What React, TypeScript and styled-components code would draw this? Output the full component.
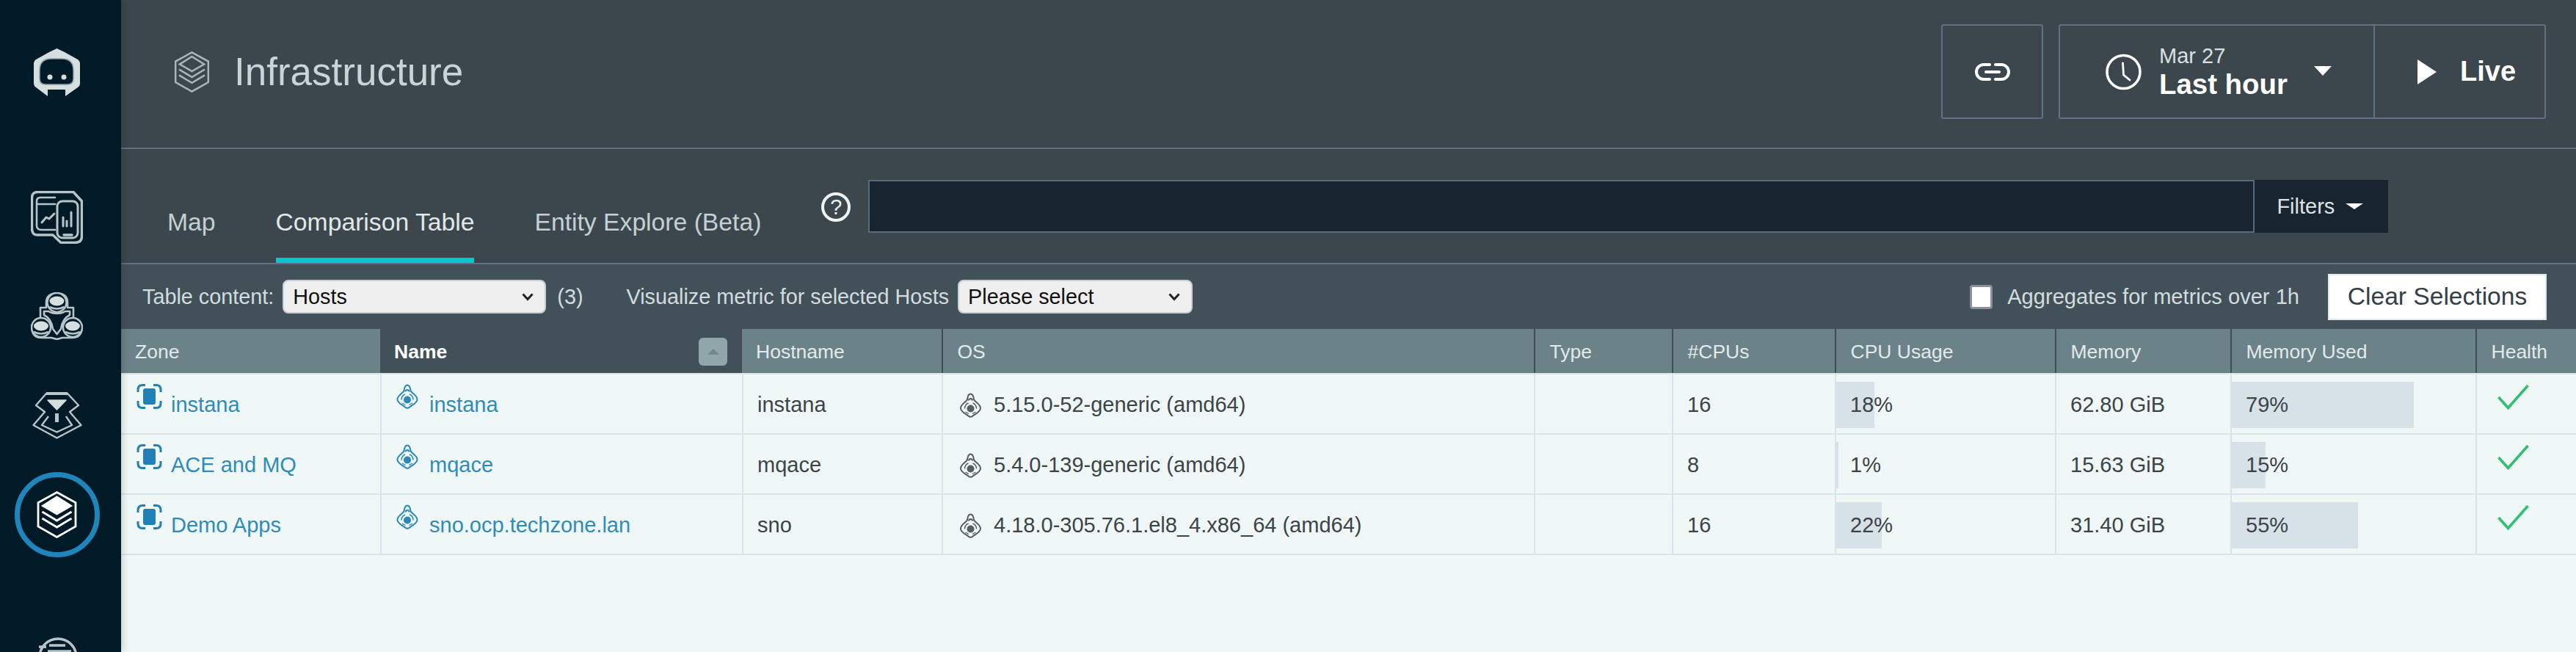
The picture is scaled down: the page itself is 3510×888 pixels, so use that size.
import React from "react";
import styled, { createGlobalStyle } from "styled-components";

const Global = createGlobalStyle`
  html, body { margin: 0; padding: 0; background: #f0f7f7; }
  * { box-sizing: border-box; }
  body { font-family: "Liberation Sans", Arial, sans-serif; }
`;

const Page = styled.div`
  display: flex;
  width: 3510px;
  height: 888px;
  overflow: hidden;
`;

const Sidebar = styled.nav`
  flex: 0 0 165px;
  height: 888px;
  overflow: hidden;
  background: #001a27;
  display: flex;
  flex-direction: column;
  align-items: center;
  padding-right: 10px;
  position: relative;
  z-index: 2;
  box-shadow: 2px 0 10px rgba(0, 0, 0, 0.18);
`;

const LogoSlot = styled.div`
  height: 228px;
  flex: none;
  padding-top: 66px;
  display: flex;
  justify-content: center;
  align-items: flex-start;
`;

const NavSlot = styled.div<{ $h?: number }>`
  height: ${(p) => p.$h ?? 135}px;
  flex: none;
  width: 100%;
  display: flex;
  justify-content: center;
  align-items: center;
`;

const ActiveRing = styled.div`
  width: 116px;
  height: 116px;
  border-radius: 50%;
  border: 7px solid #1f86bb;
  display: flex;
  align-items: center;
  justify-content: center;
`;

const LastSlot = styled.div`
  flex: none;
  margin-top: 99px;
  display: flex;
  justify-content: center;
`;

const Main = styled.main`
  flex: 1;
  min-width: 0;
  display: flex;
  flex-direction: column;
  height: 888px;
  background: #f0f7f7;
`;

const Header = styled.header`
  height: 203px;
  flex: none;
  background: #3b474c;
  border-bottom: 2px solid #5f7183;
  display: flex;
  align-items: center;
  padding: 0 41px 6px 72px;
`;

const Title = styled.h1`
  margin: 0 0 0 33px;
  font-size: 53px;
  line-height: 60px;
  font-weight: 400;
  color: #c8d4d6;
`;

const HeaderActions = styled.div`
  margin-left: auto;
  display: flex;
  gap: 21px;
`;

const LinkButton = styled.div`
  width: 139px;
  height: 129px;
  border: 2px solid #5f7183;
  border-radius: 3px;
  display: flex;
  align-items: center;
  justify-content: center;
`;

const TimeGroup = styled.div`
  width: 664px;
  height: 129px;
  border: 2px solid #5f7183;
  border-radius: 3px;
  display: flex;
`;

const TimePicker = styled.div`
  width: 429px;
  flex: none;
  display: flex;
  align-items: center;
  padding-left: 62px;
  border-right: 2px solid #5f7183;
`;

const TimeText = styled.div`
  margin-left: 24px;
  padding-top: 2px;
  display: flex;
  flex-direction: column;
  color: #fff;
`;

const TimeDate = styled.span`
  font-size: 29px;
  line-height: 33px;
  color: #d8e0e2;
`;

const TimeRange = styled.span`
  font-size: 38.4px;
  line-height: 44px;
  font-weight: 700;
`;

const Caret = styled.span<{ $w: number; $h: number; $color: string }>`
  display: block;
  flex: none;
  width: 0;
  height: 0;
  border-left: ${(p) => p.$w / 2}px solid transparent;
  border-right: ${(p) => p.$w / 2}px solid transparent;
  border-top: ${(p) => p.$h}px solid ${(p) => p.$color};
`;

const CaretSlot = styled.div`
  margin-left: 36px;
  margin-top: -3px;
`;

const LiveButton = styled.div`
  flex: 1;
  display: flex;
  align-items: center;
  padding-left: 58px;
  color: #fff;
  font-size: 38px;
  font-weight: 700;
`;

const LiveLabel = styled.span`
  margin-left: 32px;
`;

const TabsBar = styled.div`
  height: 157px;
  flex: none;
  background: #3b474c;
  border-bottom: 2px solid #5f7183;
  display: flex;
  padding-left: 22px;
`;

const TabList = styled.div`
  display: flex;
  align-self: flex-end;
`;

const Tab = styled.div<{ $active?: boolean }>`
  position: relative;
  height: 112px;
  padding: 0 41px;
  display: flex;
  align-items: center;
  font-size: 33.7px;
  color: ${(p) => (p.$active ? "#e0e8e9" : "#c4d0d3")};
  &::after {
    content: "";
    display: ${(p) => (p.$active ? "block" : "none")};
    position: absolute;
    left: 41px;
    right: 41px;
    bottom: 0;
    height: 7px;
    background: #00c8cc;
  }
`;

const Help = styled.span`
  flex: none;
  width: 40px;
  height: 40px;
  margin: 59px 0 0 41px;
  border: 4px solid #eef3f3;
  border-radius: 50%;
  color: #eef3f3;
  font-size: 29px;
  font-weight: 400;
  display: flex;
  align-items: center;
  justify-content: center;
`;

const SearchGroup = styled.div`
  margin: 42px 0 0 24px;
  display: flex;
  height: 72px;
`;

const SearchInput = styled.input`
  width: 1889px;
  height: 72px;
  background: #18242f;
  border: 2px solid #566b7e;
  outline: none;
  padding: 0 16px;
`;

const FiltersButton = styled.div`
  width: 182px;
  height: 72px;
  background: #18242f;
  color: #dbe3e5;
  font-size: 29px;
  display: flex;
  align-items: center;
  gap: 15px;
  padding-left: 30px;
`;

const Toolbar = styled.div`
  height: 88px;
  flex: none;
  background: #425159;
  display: flex;
  align-items: center;
  padding: 0 40px 0 29px;
  color: #d3dcde;
  font-size: 28.8px;
`;

const SelectWrap = styled.div<{ $w: number }>`
  position: relative;
  width: ${(p) => p.$w}px;
  height: 46px;
  margin-left: 12px;
  flex: none;
`;

const Select = styled.select`
  appearance: none;
  width: 100%;
  height: 100%;
  background: #efefef;
  border: 2px solid #c9ced2;
  border-radius: 8px;
  padding: 0 0 0 12px;
  font: 28.8px "Liberation Sans", Arial, sans-serif;
  color: #111;
  outline: none;
`;

const Chevron = styled.svg`
  position: absolute;
  right: 17px;
  top: 18px;
  pointer-events: none;
`;

const Count = styled.span`
  margin-left: 15px;
`;

const MetricLabel = styled.span`
  margin-left: 59px;
`;

const Aggregates = styled.label`
  margin-left: auto;
  display: flex;
  align-items: center;
  gap: 20px;
  font-size: 29.1px;
`;

const Check = styled.input`
  appearance: none;
  margin: 0;
  width: 31px;
  height: 33px;
  background: #fff;
  border: 3px solid #8d8f9f;
  border-radius: 4px;
`;

const ClearButton = styled.button`
  margin-left: 39px;
  width: 298px;
  height: 63px;
  background: #fff;
  border: 2px solid #e3e9ea;
  color: #33404a;
  font: 33.6px "Liberation Sans", Arial, sans-serif;
  padding: 0;
`;

const COLUMNS = "353px 493px 272px 807px 188px 222px 300px 239px 334px 137px";

const HeadRow = styled.div`
  display: grid;
  grid-template-columns: ${COLUMNS};
  height: 62px;
  flex: none;
  border-bottom: 2px solid #dbe6e8;
`;

const HeadCell = styled.div<{ $active?: boolean; $divider?: boolean }>`
  position: relative;
  display: flex;
  align-items: center;
  padding-left: ${(p) => (p.$divider ? 19.5 : 19)}px;
  padding-top: 2px;
  background: ${(p) => (p.$active ? "#425059" : "#6b8289")};
  color: ${(p) => (p.$active ? "#fff" : "#e2eaea")};
  font-size: 26.5px;
  font-weight: ${(p) => (p.$active ? 700 : 400)};
  border-left: ${(p) => (p.$divider ? "2px solid #3e4e56" : "none")};
`;

const SortButton = styled.span`
  position: absolute;
  right: 20px;
  top: 12px;
  width: 39px;
  height: 38px;
  border-radius: 6px;
  background: #8fa6ab;
  display: flex;
  align-items: center;
  justify-content: center;
`;

const SortArrow = styled.span`
  width: 0;
  height: 0;
  border-left: 8px solid transparent;
  border-right: 8px solid transparent;
  border-bottom: 8px solid #6f868c;
`;

const BodyRow = styled.div`
  display: grid;
  grid-template-columns: ${COLUMNS};
  height: 82px;
  flex: none;
  padding-top: 0;
  border-bottom: 2px solid #d9e5e8;
`;

const Cell = styled.div<{ $first?: boolean }>`
  position: relative;
  display: flex;
  align-items: center;
  padding: 3px 0 0 ${(p) => (p.$first ? 21 : 19)}px;
  font-size: 29px;
  color: #3c4448;
  border-left: ${(p) => (p.$first ? "none" : "2px solid #d9e3e9")};
  white-space: nowrap;
`;

const EntityLink = styled.a<{ $gap: number }>`
  color: #2f8cba;
  margin-left: ${(p) => p.$gap}px;
`;

const TopIcon = styled.svg`
  align-self: flex-start;
  margin-top: 10px;
  flex: none;
`;

const OsIconSvg = styled.svg`
  flex: none;
  margin-left: 2px;
`;

const OsText = styled.span`
  margin-left: 15px;
`;

const Bar = styled.div`
  position: absolute;
  left: 0;
  top: 10px;
  height: 63px;
  background: #d6e1e8;
`;

const CellValue = styled.span`
  position: relative;
`;

const HealthMark = styled.svg`
  align-self: flex-start;
  margin: 11px 0 0 9px;
  flex: none;
`;

const LIGHT = "#d5dfe0";
const MID = "#b8c5c8";

const Logo = () => (
  <svg width="63" height="66" viewBox="0 0 63 66">
    <path d="M31.5 0 L42 5 L60 15 Q63 17 63 20 V48 Q63 51 60 53 L43 65 V56 H19 V65 L3 53 Q0 51 0 48 V20 Q0 17 3 15 L21 5 Z" fill={LIGHT} />
    <path d="M24 14 H38 Q54 14 54 30 V41 Q54 49 46 49 H16 Q8 49 8 41 V30 Q8 14 24 14 Z" fill="#001a27" stroke="#8f9da1" strokeWidth="1.5" />
    <circle cx="22" cy="39" r="3.5" fill={LIGHT} />
    <circle cx="41" cy="39" r="3.5" fill={LIGHT} />
  </svg>
);

const DevicesIcon = () => (
  <svg width="71" height="72" viewBox="0 0 71 72" fill="none" stroke={MID} strokeWidth="2.6" strokeLinecap="round" strokeLinejoin="round">
    <path d="M9 1.5 H58 L69.5 14 V62 Q69.5 70.5 60 70.5 H41 L30 60 H9 Q1.5 60 1.5 51 V10 Q1.5 1.5 9 1.5 Z" strokeWidth="3.4" />
    <path d="M33 9 H13 Q8 9 8 14 V47 Q8 53 14 53 H33" />
    <path d="M10 18 H33" />
    <rect x="36" y="14" width="28" height="50" rx="7" strokeWidth="3" fill="#001a27" />
    <path d="M45 60 H56" strokeWidth="3.4" />
    <path d="M15 43 L21 36 L25 38 L32 31" strokeWidth="3" />
    <path d="M44 36 V48 M49 41 V48 M55 29 V48" strokeWidth="3" />
  </svg>
);

const Database = ({ cx, cy }: { cx: number; cy: number }) => (
  <g>
    <circle cx={cx} cy={cy} r="13" fill="#001a27" />
    <ellipse cx={cx} cy={cy - 2} rx="10" ry="6.5" fill={LIGHT} stroke="none" />
    <path d={`M${cx - 10} ${cy + 6} Q${cx} ${cy + 11} ${cx + 10} ${cy + 6}`} />
  </g>
);

const ClusterIcon = () => (
  <svg width="71" height="65" viewBox="0 0 71 65" fill="none" stroke={MID} strokeWidth="2.6" strokeLinejoin="round">
    <path d="M21 14 Q21 1.5 35.5 1.5 Q50 1.5 50 14 V21 H58 V35 Q69.5 38 69.5 48 Q69.5 62 56 62 H43 L35.5 64 L28 62 H14 Q1.5 62 1.5 48 Q1.5 38 13 35 V21 H21 Z" />
    <path d="M18 26 H24 Q29 29 35.5 29 Q42 29 47 26 H53 V31 Q43 36 41 50 L35.5 57 L30 50 Q28 36 18 31 Z" />
    <Database cx={35.5} cy={14} />
    <Database cx={14} cy={48} />
    <Database cx={57} cy={48} />
  </svg>
);

const PowerIcon = () => (
  <svg width="68" height="64" viewBox="0 0 68 64" fill="none" stroke={MID} strokeWidth="2.4" strokeLinejoin="round">
    <path d="M19 2 H48 L63 18 L51 27 L66.5 45 L33.5 62.5 L1.5 45 L17 27 L5 18 Z" />
    <path d="M19 2 H48" strokeWidth="4" />
    <path d="M21 11 H46 L33.5 24 Z" fill={LIGHT} stroke={LIGHT} strokeWidth="1.5" />
    <path d="M33.5 29 V41" strokeWidth="5" />
    <path d="M22 33 L13 45 L33.5 54.5 L54 45 L46 33" />
  </svg>
);

const Layers = ({ w, h, color, solid }: { w: number; h: number; color: string; solid?: boolean }) => (
  <svg width={w} height={h} viewBox="0 0 54 64" fill="none" stroke={color} strokeWidth="2.8" strokeLinejoin="miter">
    <path d="M27 1.5 L52.5 15.5 V48 L27 62.5 L1.5 48 V15.5 Z" />
    <path d="M27 8 L46 20 L27 31 L8 20 Z" fill={solid ? color : "none"} />
    <path d="M7 28 L27 40 L47 28" />
    <path d="M7 37 L27 49 L47 37" />
  </svg>
);

const BottomIcon = () => (
  <svg width="54" height="60" viewBox="0 0 54 60" fill="none" stroke={MID} strokeWidth="3.4">
    <circle cx="28" cy="28" r="25" />
    <path d="M2 14 H12 M16 12 H38 M14 20 H46 M10 27 H46" />
  </svg>
);

const LinkIcon = () => (
  <svg width="50" height="26" viewBox="0 0 50 26" fill="none" stroke="#fff" strokeWidth="4" strokeLinecap="round">
    <path d="M21 3 H13 A10 10 0 0 0 13 23 H21" />
    <path d="M29 3 H37 A10 10 0 0 1 37 23 H29" />
    <path d="M16 13 H34" />
  </svg>
);

const Clock = () => (
  <svg width="49" height="50" viewBox="0 0 49 50" fill="none" stroke="#fff" strokeWidth="3.6" strokeLinecap="round">
    <circle cx="24.5" cy="25" r="22.5" />
    <path d="M23.5 13 L24.5 29 L33 36" strokeWidth="2.8" />
  </svg>
);

const Play = () => (
  <svg width="26" height="34" viewBox="0 0 26 34">
    <path d="M0 0 L26 17 L0 34 Z" fill="#fff" />
  </svg>
);

const ZoneIcon = () => (
  <TopIcon width="35" height="34" viewBox="0 0 35 34" fill="none" stroke="#2280b8" strokeWidth="3">
    <rect x="9" y="6" width="17" height="22" rx="3" fill="#2280b8" stroke="none" />
    <path d="M12 1.5 H8 Q2 1.5 2 8 V11" />
    <path d="M23 1.5 H27 Q33 1.5 33 8 V11" />
    <path d="M2 23 V26 Q2 32.5 8 32.5 H12" />
    <path d="M33 23 V26 Q33 32.5 27 32.5 H23" />
  </TopIcon>
);

const TuxShape = ({ color }: { color: string }) => (
  <>
    <path d="M16 1.5 C13 1.5 12 5 11.5 9 C11 12 2.5 15 2.5 21 C2.5 26 10 29 13 31.5 Q16 34 19 31.5 C22 29 29.5 26 29.5 21 C29.5 15 21 12 20.5 9 C20 5 19 1.5 16 1.5 Z" />
    <path d="M13.5 10.5 a2.5 2.5 0 0 1 5 0" />
    <circle cx="16" cy="21.5" r="5" fill={color} stroke="none" />
    <path d="M8 21.5 C8 17 10.5 15 13 14 M24 21.5 C24 17 21.5 15 19 14 M9 26 L13.5 28.5 M23 26 L18.5 28.5" strokeWidth="1.4" />
  </>
);

const HostIcon = () => (
  <TopIcon width="32" height="34" viewBox="0 0 32 34" fill="none" stroke="#2a87b9" strokeWidth="2">
    <TuxShape color="#2a87b9" />
  </TopIcon>
);

const OsIcon = () => (
  <OsIconSvg width="33" height="34" viewBox="0 0 32 34" fill="none" stroke="#565e62" strokeWidth="2">
    <TuxShape color="#565e62" />
  </OsIconSvg>
);

const Healthy = () => (
  <HealthMark width="43" height="34" viewBox="0 0 43 34" fill="none" stroke="#2fc072" strokeWidth="3.6">
    <path d="M1.5 17 L14.5 31.5 L41.5 1" />
  </HealthMark>
);

const ChevronDown = () => (
  <Chevron width="16" height="11" viewBox="0 0 16 11" fill="none" stroke="#222" strokeWidth="3">
    <path d="M1.5 1.5 L8 8.5 L14.5 1.5" />
  </Chevron>
);

type HostRow = {
  zone: string;
  name: string;
  hostname: string;
  os: string;
  cpus: string;
  cpu: string;
  cpuBar: number;
  memory: string;
  used: string;
  usedBar: number;
};

const rows: HostRow[] = [
  { zone: "instana", name: "instana", hostname: "instana", os: "5.15.0-52-generic (amd64)", cpus: "16", cpu: "18%", cpuBar: 52, memory: "62.80 GiB", used: "79%", usedBar: 248 },
  { zone: "ACE and MQ", name: "mqace", hostname: "mqace", os: "5.4.0-139-generic (amd64)", cpus: "8", cpu: "1%", cpuBar: 3, memory: "15.63 GiB", used: "15%", usedBar: 46 },
  { zone: "Demo Apps", name: "sno.ocp.techzone.lan", hostname: "sno", os: "4.18.0-305.76.1.el8_4.x86_64 (amd64)", cpus: "16", cpu: "22%", cpuBar: 62, memory: "31.40 GiB", used: "55%", usedBar: 172 },
];

const heads = ["Hostname", "OS", "Type", "#CPUs", "CPU Usage", "Memory", "Memory Used", "Health"];

export default function App() {
  return (
    <Page>
      <Global />
      <Sidebar>
        <LogoSlot>
          <Logo />
        </LogoSlot>
        <NavSlot><DevicesIcon /></NavSlot>
        <NavSlot><ClusterIcon /></NavSlot>
        <NavSlot><PowerIcon /></NavSlot>
        <NavSlot>
          <ActiveRing>
            <Layers w={55} h={64} color="#ffffff" solid />
          </ActiveRing>
        </NavSlot>
        <LastSlot><BottomIcon /></LastSlot>
      </Sidebar>
      <Main>
        <Header>
          <Layers w={49} h={56} color="#a9b6ba" />
          <Title>Infrastructure</Title>
          <HeaderActions>
            <LinkButton><LinkIcon /></LinkButton>
            <TimeGroup>
              <TimePicker>
                <Clock />
                <TimeText>
                  <TimeDate>Mar 27</TimeDate>
                  <TimeRange>Last hour</TimeRange>
                </TimeText>
                <CaretSlot><Caret $w={24} $h={13} $color="#fff" /></CaretSlot>
              </TimePicker>
              <LiveButton>
                <Play />
                <LiveLabel>Live</LiveLabel>
              </LiveButton>
            </TimeGroup>
          </HeaderActions>
        </Header>
        <TabsBar>
          <TabList>
            <Tab>Map</Tab>
            <Tab $active>Comparison Table</Tab>
            <Tab>Entity Explore (Beta)</Tab>
          </TabList>
          <Help>?</Help>
          <SearchGroup>
            <SearchInput readOnly />
            <FiltersButton>
              Filters
              <Caret $w={24} $h={8} $color="#fff" />
            </FiltersButton>
          </SearchGroup>
        </TabsBar>
        <Toolbar>
          <span>Table content:</span>
          <SelectWrap $w={359}>
            <Select defaultValue="Hosts">
              <option>Hosts</option>
            </Select>
            <ChevronDown />
          </SelectWrap>
          <Count>(3)</Count>
          <MetricLabel>Visualize metric for selected Hosts</MetricLabel>
          <SelectWrap $w={320}>
            <Select defaultValue="Please select">
              <option>Please select</option>
            </Select>
            <ChevronDown />
          </SelectWrap>
          <Aggregates>
            <Check type="checkbox" readOnly />
            Aggregates for metrics over 1h
          </Aggregates>
          <ClearButton>Clear Selections</ClearButton>
        </Toolbar>
        <HeadRow>
          <HeadCell>Zone</HeadCell>
          <HeadCell $active>
            Name
            <SortButton><SortArrow /></SortButton>
          </HeadCell>
          {heads.map((h, i) => (
            <HeadCell key={h} $divider={i > 0}>{h}</HeadCell>
          ))}
        </HeadRow>
        {rows.map((r) => (
          <BodyRow key={r.name}>
            <Cell $first>
              <ZoneIcon />
              <EntityLink $gap={12}>{r.zone}</EntityLink>
            </Cell>
            <Cell>
              <HostIcon />
              <EntityLink $gap={14}>{r.name}</EntityLink>
            </Cell>
            <Cell>{r.hostname}</Cell>
            <Cell>
              <OsIcon />
              <OsText>{r.os}</OsText>
            </Cell>
            <Cell />
            <Cell>{r.cpus}</Cell>
            <Cell>
              <Bar style={{ width: r.cpuBar }} />
              <CellValue>{r.cpu}</CellValue>
            </Cell>
            <Cell>{r.memory}</Cell>
            <Cell>
              <Bar style={{ width: r.usedBar }} />
              <CellValue>{r.used}</CellValue>
            </Cell>
            <Cell>
              <Healthy />
            </Cell>
          </BodyRow>
        ))}
      </Main>
    </Page>
  );
}
